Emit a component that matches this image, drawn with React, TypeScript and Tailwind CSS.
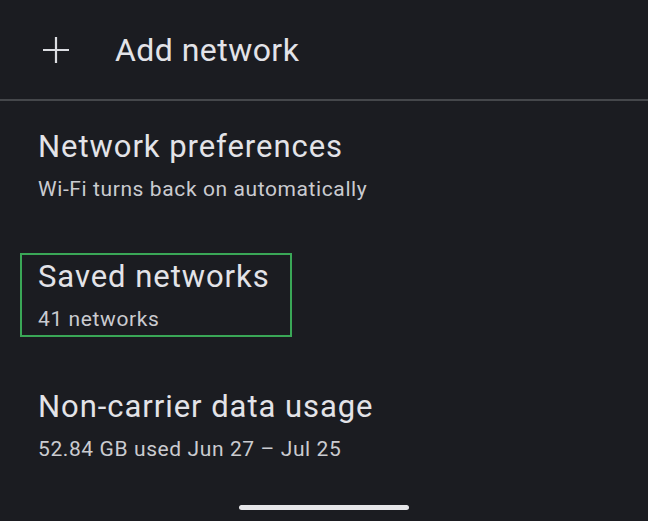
import React from 'react';

const items = [
    { title: 'Network preferences', subtitle: 'Wi-Fi turns back on automatically', highlighted: false },
    { title: 'Saved networks', subtitle: '41 networks', highlighted: true },
    { title: 'Non-carrier data usage', subtitle: '52.84 GB used Jun 27 – Jul 25', highlighted: false },
];

const PlusIcon = () => (
    <svg width="26" height="26" viewBox="0 0 26 26" fill="none" stroke="#dcdde2" strokeWidth="2.2">
        <path d="M13 0v26M0 13h26" />
    </svg>
);

export default function App() {
    return (
        <div
            className="flex h-[521px] w-[648px] flex-col overflow-hidden bg-[#1b1c21] pt-[30px]"
            style={{ fontFamily: 'Roboto, "Noto Sans", sans-serif' }}
        >
            <div className="flex h-[40px] items-center">
                <div className="ml-[43px] w-[72px]">
                    <PlusIcon />
                </div>
                <span className="text-[32px] leading-[40px] tracking-[0.45px] text-[#e3e3e8]">Add network</span>
            </div>
            <div className="mt-[29px] h-[2px] w-full bg-[#45474b]" />

            <div className="mt-[22px] flex flex-col gap-[46px]">
                {items.map((item) => (
                    <div
                        className={`ml-[20px] w-[272px] border-2 pt-[1.5px] pb-[2.5px] pl-[16px] ${
                            item.highlighted ? 'border-[#3aa757]' : 'border-transparent'
                        }`}
                        key={item.title}
                    >
                        <div className="whitespace-nowrap text-[31px] leading-[40px] tracking-[0.95px] text-[#e3e3e8]">
                            {item.title}
                        </div>
                        <div className="mt-[8px] whitespace-nowrap text-[21px] leading-[28px] tracking-[0.6px] text-[#cacbd0]">
                            {item.subtitle}
                        </div>
                    </div>
                ))}
            </div>

            <div className="mx-auto mt-[38px] h-[5px] w-[170px] rounded-full bg-[#e6e6e9]" />
        </div>
    );
}
